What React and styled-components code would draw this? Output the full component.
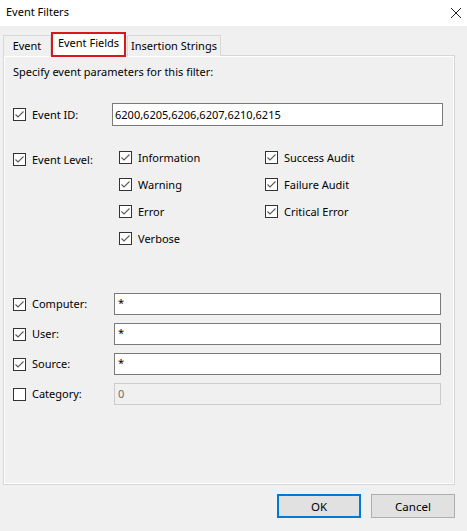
import React from 'react';
import styled, { createGlobalStyle } from 'styled-components';

const GlobalStyle = createGlobalStyle`
    html, body {
        margin: 0;
        padding: 0;
        background: #f0f0f0;
    }
    body {
        font-family: 'Noto Sans', 'Open Sans', sans-serif;
        font-size: 11px;
        color: #000;
    }
`;

const levelsLeft = ['Information', 'Warning', 'Error', 'Verbose'];
const levelsRight = ['Success Audit', 'Failure Audit', 'Critical Error'];

const tabs = [
    { label: 'Event', width: 48 },
    { label: 'Event Fields', width: 75, active: true },
    { label: 'Insertion Strings', width: 94 },
];

const fields = [
    { label: 'Computer:', value: '*', checked: true },
    { label: 'User:', value: '*', checked: true },
    { label: 'Source:', value: '*', checked: true },
    { label: 'Category:', value: '0', checked: false, disabled: true },
];

const CheckBox = ({ checked }) => (
    <Box>
        {checked && (
            <svg width="11" height="11" viewBox="0 0 11 11">
                <polyline points="1.5,5.5 4,8 9.5,2.5" fill="none" stroke="#5a5a5a" strokeWidth="1.1" />
            </svg>
        )}
    </Box>
);

const App = () => {
    return (
        <Dialog>
            <GlobalStyle />
            <TitleBar>
                <Title>Event Filters</Title>
                <svg width="12" height="12" viewBox="0 0 12 12">
                    <path d="M1 1 L11 11 M11 1 L1 11" stroke="#222" strokeWidth="1" />
                </svg>
            </TitleBar>

            <Tabs>
                {tabs.map(tab => (
                    <Tab key={tab.label} active={tab.active} $width={tab.width}>
                        {tab.label}
                    </Tab>
                ))}
            </Tabs>

            <Panel>
                <Intro>Specify event parameters for this filter:</Intro>

                <IdRow>
                    <Check>
                        <CheckBox checked />
                        <span>Event ID:</span>
                    </Check>
                    <Input>6200,6205,6206,6207,6210,6215</Input>
                </IdRow>

                <LevelRow>
                    <Check>
                        <CheckBox checked />
                        <span>Event Level:</span>
                    </Check>
                    <LevelColumn>
                        {levelsLeft.map(level => (
                            <LevelItem key={level}>
                                <CheckBox checked />
                                <span>{level}</span>
                            </LevelItem>
                        ))}
                    </LevelColumn>
                    <LevelColumn>
                        {levelsRight.map(level => (
                            <LevelItem key={level}>
                                <CheckBox checked />
                                <span>{level}</span>
                            </LevelItem>
                        ))}
                    </LevelColumn>
                </LevelRow>

                <FieldList>
                    {fields.map(field => (
                        <FieldRow key={field.label}>
                            <Check>
                                <CheckBox checked={field.checked} />
                                <span>{field.label}</span>
                            </Check>
                            <FieldInput disabled={field.disabled}>{field.value}</FieldInput>
                        </FieldRow>
                    ))}
                </FieldList>
            </Panel>

            <Buttons>
                <Button primary>OK</Button>
                <Button>Cancel</Button>
            </Buttons>
        </Dialog>
    );
};

export default App;

const Dialog = styled.div`
    width: 467px;
    height: 531px;
    box-sizing: border-box;
    background: #f0f0f0;
    overflow: hidden;
`;

const TitleBar = styled.div`
    display: flex;
    align-items: center;
    justify-content: space-between;
    height: 26px;
    padding: 0 5px 0 6px;
    background: #fff;
`;

const Title = styled.div`
    font-size: 11px;
    line-height: 16px;
    margin-top: -3px;
`;

const Tabs = styled.div`
    display: flex;
    align-items: flex-end;
    height: 30px;
    padding-left: 3px;
    position: relative;
    z-index: 1;
`;

const Tab = styled.div`
    box-sizing: border-box;
    display: flex;
    align-items: center;
    justify-content: center;
    width: ${p => p.$width}px;
    height: ${p => (p.active ? '25px' : '21px')};
    margin-bottom: ${p => (p.active ? '-1px' : '0')};
    margin-right: ${p => (p.active ? '1px' : '0')};
    padding-bottom: ${p => (p.active ? '3px' : '0')};
    background: ${p => (p.active ? '#fff' : '#f0f0f0')};
    border: ${p => (p.active ? '2px solid #d7191c' : '1px solid #d9d9d9')};
    border-bottom: ${p => (p.active ? '2px solid #d7191c' : 'none')};
    line-height: 16px;
`;

const Panel = styled.div`
    box-sizing: border-box;
    width: 452px;
    height: 430px;
    margin-left: 3px;
    margin-top: -1px;
    padding: 8px 11px 0 9px;
    border: 1px solid #d6d6d6;
    box-shadow: inset 1px 1px 0 #fff, inset -1px -1px 0 #fff;
    background: #f0f0f0;
`;

const Intro = styled.div`
    line-height: 16px;
`;

const Check = styled.div`
    display: flex;
    align-items: center;
    gap: 6px;
    line-height: 16px;
`;

const Box = styled.div`
    box-sizing: border-box;
    width: 13px;
    height: 13px;
    border: 1px solid #333;
    background: #fff;
    display: flex;
    align-items: center;
    justify-content: center;
    flex-shrink: 0;
`;

const IdRow = styled.div`
    display: grid;
    grid-template-columns: 99px 1fr;
    align-items: center;
    margin-top: 23px;
`;

const Input = styled.div`
    box-sizing: border-box;
    height: 23px;
    display: flex;
    align-items: center;
    padding-left: 2px;
    border: 1px solid #7a7a7a;
    background: #fff;
`;

const LevelRow = styled.div`
    display: grid;
    grid-template-columns: 106px 146px 1fr;
    align-items: start;
    margin-top: 18px;

    & > ${Check} {
        height: 27px;
        margin-top: 2px;
    }
`;

const LevelColumn = styled.div`
    display: flex;
    flex-direction: column;
`;

const LevelItem = styled.div`
    display: flex;
    align-items: center;
    gap: 6px;
    height: 27px;
`;

const FieldList = styled.div`
    display: flex;
    flex-direction: column;
    gap: 8px;
    margin-top: 41px;
    padding-right: 2px;
`;

const FieldRow = styled.div`
    display: grid;
    grid-template-columns: 101px 1fr;
    align-items: center;
`;

const FieldInput = styled.div`
    box-sizing: border-box;
    height: 22px;
    padding: 2px 0 0 3px;
    line-height: 14px;
    border: 1px solid ${p => (p.disabled ? '#cccccc' : '#7a7a7a')};
    background: ${p => (p.disabled ? '#f0f0f0' : '#fff')};
    color: ${p => (p.disabled ? '#6d6d6d' : '#000')};
    ${p => p.disabled && 'padding: 0 0 0 3px; display: flex; align-items: center;'}
`;

const Buttons = styled.div`
    display: flex;
    justify-content: flex-end;
    gap: 10px;
    margin-top: 9px;
    padding-right: 12px;
`;

const Button = styled.div`
    box-sizing: border-box;
    width: 84px;
    height: 24px;
    display: flex;
    align-items: center;
    justify-content: center;
    background: #e1e1e1;
    border: ${p => (p.primary ? '2px solid #0078d7' : '1px solid #adadad')};
    font-size: 11.5px;
`;
